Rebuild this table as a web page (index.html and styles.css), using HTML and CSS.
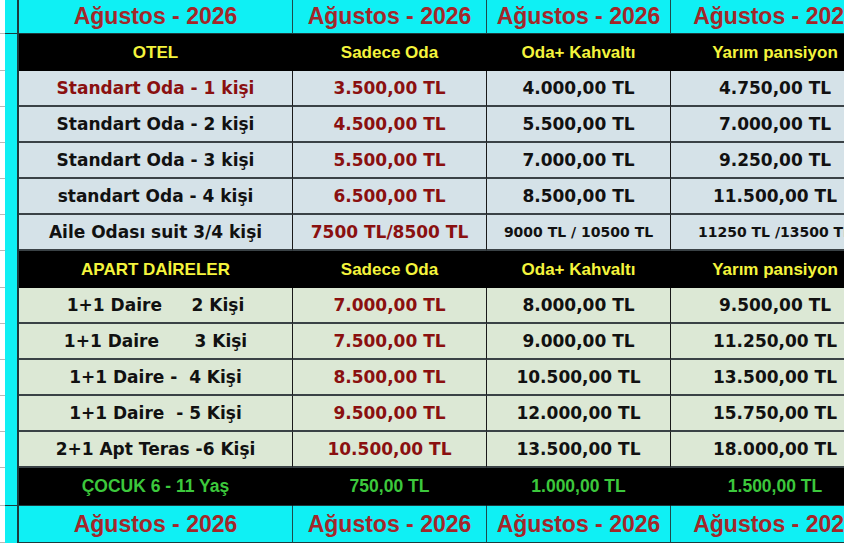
FILE: index.html
```html
<!DOCTYPE html>
<html lang="tr">
<head>
<meta charset="utf-8">
<title>Ağustos 2026 Fiyat Listesi</title>
<link rel="stylesheet" href="styles.css">
</head>
<body>
<div class="sheet">
  <div class="row r-title">
    <div class="gut"></div><div class="strip mark"></div>
    <div class="c title">Ağustos - 2026</div><div class="c title">Ağustos - 2026</div><div class="c title">Ağustos - 2026</div><div class="c title">Ağustos - 2026</div>
  </div>
  <div class="row r-head">
    <div class="gut"></div><div class="strip"></div>
    <div class="c head">OTEL</div><div class="c head">Sadece Oda</div><div class="c head">Oda+ Kahvaltı</div><div class="c head">Yarım pansiyon</div>
  </div>
  <div class="row r-data">
    <div class="gut"></div><div class="strip"></div>
    <div class="c d blue red">Standart Oda - 1 kişi</div><div class="c d blue red">3.500,00 TL</div><div class="c d blue">4.000,00 TL</div><div class="c d blue">4.750,00 TL</div>
  </div>
  <div class="row r-data">
    <div class="gut"></div><div class="strip"></div>
    <div class="c d blue">Standart Oda - 2 kişi</div><div class="c d blue red">4.500,00 TL</div><div class="c d blue">5.500,00 TL</div><div class="c d blue">7.000,00 TL</div>
  </div>
  <div class="row r-data">
    <div class="gut"></div><div class="strip"></div>
    <div class="c d blue">Standart Oda - 3 kişi</div><div class="c d blue red">5.500,00 TL</div><div class="c d blue">7.000,00 TL</div><div class="c d blue">9.250,00 TL</div>
  </div>
  <div class="row r-data">
    <div class="gut"></div><div class="strip"></div>
    <div class="c d blue">standart Oda - 4 kişi</div><div class="c d blue red">6.500,00 TL</div><div class="c d blue">8.500,00 TL</div><div class="c d blue">11.500,00 TL</div>
  </div>
  <div class="row r-data">
    <div class="gut"></div><div class="strip"></div>
    <div class="c d blue">Aile Odası suit 3/4 kişi</div><div class="c d blue red">7500 TL/8500 TL</div><div class="c d blue small">9000 TL / 10500 TL</div><div class="c d blue small">11250 TL /13500 TL</div>
  </div>
  <div class="row r-head">
    <div class="gut"></div><div class="strip"></div>
    <div class="c head">APART DAİRELER</div><div class="c head">Sadece Oda</div><div class="c head">Oda+ Kahvaltı</div><div class="c head">Yarım pansiyon</div>
  </div>
  <div class="row r-data">
    <div class="gut"></div><div class="strip"></div>
    <div class="c d green">1+1 Daire     2 Kişi</div><div class="c d green red">7.000,00 TL</div><div class="c d green">8.000,00 TL</div><div class="c d green">9.500,00 TL</div>
  </div>
  <div class="row r-data">
    <div class="gut"></div><div class="strip"></div>
    <div class="c d green">1+1 Daire      3 Kişi</div><div class="c d green red">7.500,00 TL</div><div class="c d green">9.000,00 TL</div><div class="c d green">11.250,00 TL</div>
  </div>
  <div class="row r-data">
    <div class="gut"></div><div class="strip"></div>
    <div class="c d green">1+1 Daire -  4 Kişi</div><div class="c d green red">8.500,00 TL</div><div class="c d green">10.500,00 TL</div><div class="c d green">13.500,00 TL</div>
  </div>
  <div class="row r-data">
    <div class="gut"></div><div class="strip"></div>
    <div class="c d green">1+1 Daire  - 5 Kişi</div><div class="c d green red">9.500,00 TL</div><div class="c d green">12.000,00 TL</div><div class="c d green">15.750,00 TL</div>
  </div>
  <div class="row r-data">
    <div class="gut"></div><div class="strip"></div>
    <div class="c d green">2+1 Apt Teras -6 Kişi</div><div class="c d green red">10.500,00 TL</div><div class="c d green">13.500,00 TL</div><div class="c d green">18.000,00 TL</div>
  </div>
  <div class="row r-child">
    <div class="gut"></div><div class="strip mark"></div>
    <div class="c child">ÇOCUK 6 - 11 Yaş</div><div class="c child">750,00 TL</div><div class="c child">1.000,00 TL</div><div class="c child">1.500,00 TL</div>
  </div>
  <div class="row r-title">
    <div class="gut"></div><div class="strip"></div>
    <div class="c title">Ağustos - 2026</div><div class="c title">Ağustos - 2026</div><div class="c title">Ağustos - 2026</div><div class="c title">Ağustos - 2026</div>
  </div>
</div>
</body>
</html>
```

FILE: styles.css
```css
html, body {
  margin: 0;
  padding: 0;
  background: #ffffff;
  overflow: hidden;
}

.sheet {
  display: grid;
  grid-template-columns: 5px 14px 274px 194px 184px 209px;
  grid-template-rows: 34px 37px 36px 36px 36px 36px 36px 37px 36px 36px 36px 36px 36px 38px 37px;
  width: 911px;
}

.row {
  display: contents;
}

.gut {
  background: #ffffff;
  border-bottom: 1px solid #b8b8b8;
  box-sizing: border-box;
}

.strip {
  background: #0ff0f4;
  border-right: 2px solid #1d3a3c;
  box-sizing: border-box;
}

.strip.mark {
  border-bottom: 1px solid #1d3a3c;
}

.c {
  box-sizing: border-box;
  display: flex;
  align-items: center;
  justify-content: center;
  white-space: pre;
  border-right: 1px solid #1a1a1a;
}

.title {
  background: #0ff0f4;
  color: #a3272a;
  font-family: "Liberation Sans", Arial, sans-serif;
  font-weight: bold;
  font-size: 23px;
  border-right-color: #1d4a4c;
  border-bottom: 1px solid #1d3a3c;
}

.head {
  background: #000000;
  color: #f4f43c;
  font-family: "Liberation Sans", Arial, sans-serif;
  font-weight: bold;
  font-size: 17px;
  border-right-color: #000000;
}

.d {
  font-family: "DejaVu Sans", Verdana, sans-serif;
  font-weight: bold;
  font-size: 17px;
  color: #111111;
  border-bottom: 2px solid #3a4246;
}

.d.blue {
  background: #d5e2e8;
}

.d.green {
  background: #dce8d5;
}

.d.red {
  color: #8a1010;
}

.d.small {
  font-size: 14px;
}

.child {
  background: #000000;
  color: #3cc83c;
  font-family: "Liberation Sans", Arial, sans-serif;
  font-weight: bold;
  font-size: 17.5px;
  border-right-color: #000000;
  border-bottom: 1px solid #1d3a3c;
}
```
